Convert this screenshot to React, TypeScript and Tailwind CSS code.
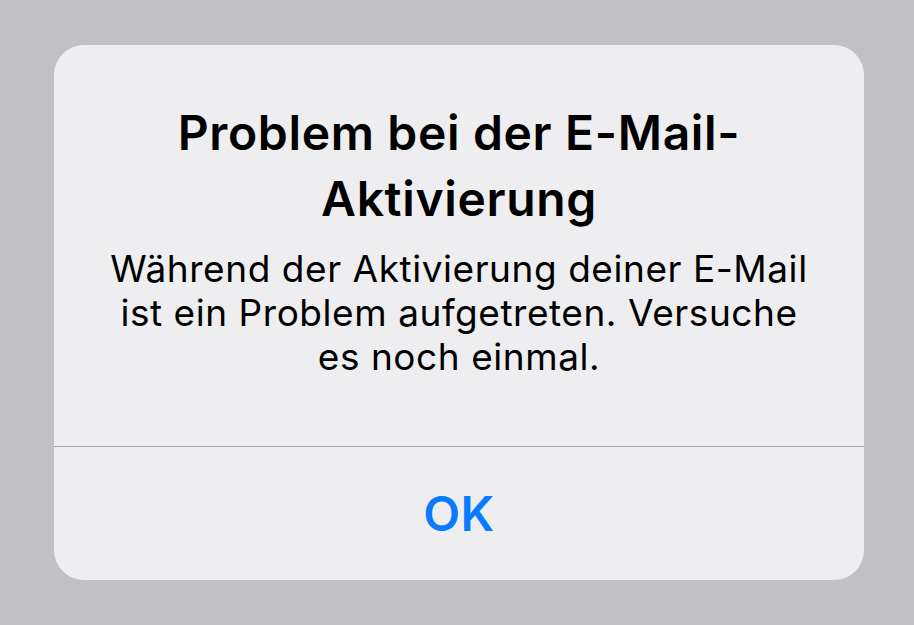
export default function App() {
  return (
    <div
      className="w-[914px] h-[625px] bg-[#c1c0c5] pt-[45px] pl-[54px]"
      style={{ fontFamily: 'Inter, "Noto Sans", sans-serif' }}
    >
      <div className="w-[810px] h-[535px] bg-[#eeeef0] rounded-[30px] flex flex-col overflow-hidden">
        <div className="h-[401px] flex flex-col items-center pt-[55px] px-[20px] text-center text-black">
          <div className="text-[48px] leading-[66px] font-semibold tracking-[0.65px]">
            Problem bei der E-Mail-
            <br />
            Aktivierung
          </div>
          <div className="mt-[15px] text-[37px] leading-[44px] font-normal tracking-[0.55px]">
            Während der Aktivierung deiner E-Mail
            <br />
            ist ein Problem aufgetreten. Versuche
            <br />
            es noch einmal.
          </div>
        </div>
        <div className="h-px bg-[#a8a8ab]" />
        <div className="flex-1 flex items-center justify-center">
          <span className="text-[48px] font-semibold text-[#0a7aff] tracking-[0.5px]">OK</span>
        </div>
      </div>
    </div>
  );
}
